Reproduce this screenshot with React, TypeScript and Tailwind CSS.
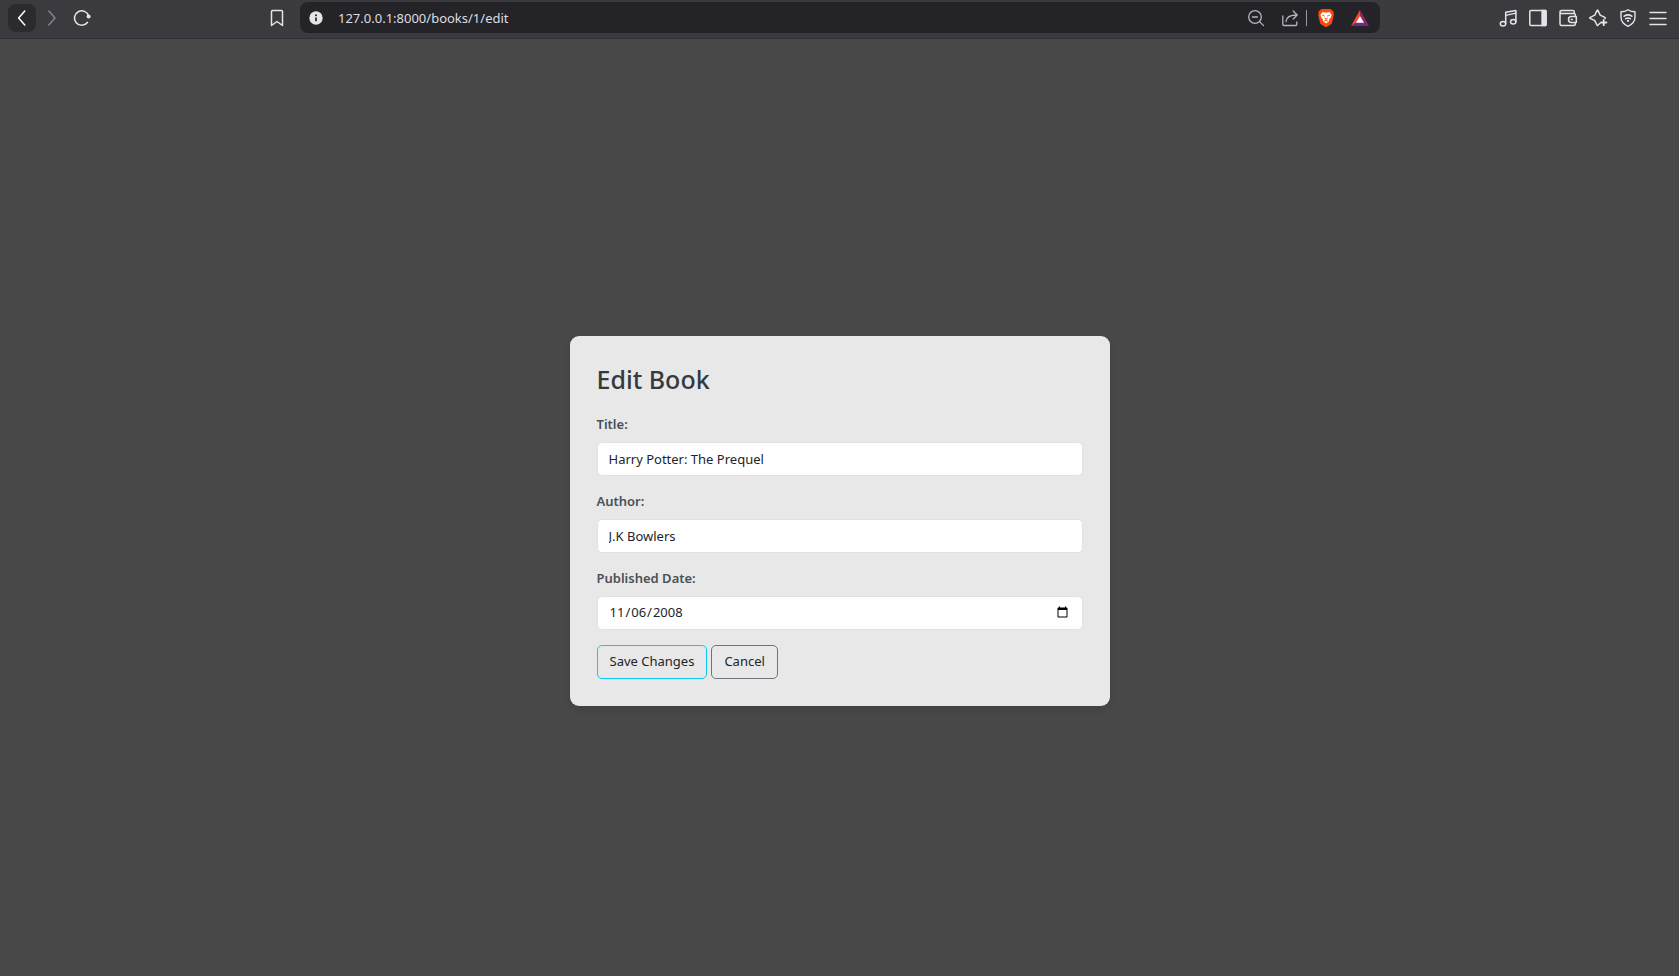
import { useState } from "react";
import type { ReactNode } from "react";

function Icon({ children, className = "h-5 w-5" }: { children: ReactNode; className?: string }) {
  return (
    <svg
      viewBox="0 0 20 20"
      fill="none"
      stroke="currentColor"
      strokeWidth="1.3"
      strokeLinecap="round"
      strokeLinejoin="round"
      aria-hidden="true"
      className={className}
    >
      {children}
    </svg>
  );
}

function ToolButton({ label, className = "", children }: { label: string; className?: string; children: ReactNode }) {
  return (
    <button type="button" aria-label={label} className={`flex h-7 shrink-0 items-center justify-center ${className}`}>
      {children}
    </button>
  );
}

function Toolbar() {
  return (
    <header className="flex h-[39px] items-start border-b border-[#303033] bg-[#3b3a3f] pt-[2px] text-[#e4e3e8]">
      <div className="flex w-[300px] shrink-0 items-center pt-[2px] pl-2">
        <ToolButton label="Back" className="w-7 rounded-lg bg-[#2b2b2d] text-white">
          <Icon>
            <path d="M12.8 3 6.6 10l6.2 7" strokeWidth="1.5" />
          </Icon>
        </ToolButton>
        <ToolButton label="Forward" className="w-8 text-[#85848a]">
          <Icon>
            <path d="M6.800 3 13 10l-6.200 7" strokeWidth="1.5" />
          </Icon>
        </ToolButton>
        <ToolButton label="Reload" className="w-7">
          <Icon>
            <path d="M16.600 8A7.200 7.200 0 1 0 15.400 14.400" strokeWidth="1.6" />
            <circle cx="16.600" cy="8.400" r="2" fill="currentColor" stroke="none" />
          </Icon>
        </ToolButton>
        <ToolButton label="Bookmark this page" className="mr-[13px] ml-auto w-5">
          <Icon>
            <path d="M5.500 2.500h9q1 0 1 1v14L10 13.500l-5.500 4v-14q0-1 1-1Z" strokeWidth="1.5" />
          </Icon>
        </ToolButton>
      </div>

      <div className="flex h-[31px] min-w-0 flex-1 items-center rounded-lg bg-[#242428] pr-[10px] pl-[6px]">
        <ToolButton label="Site information" className="w-5">
          <Icon>
            <circle cx="10" cy="10" r="6.700" fill="#e4e3e8" stroke="none" />
            <path d="M10 9.500v3.700" stroke="#242428" strokeWidth="1.700" strokeLinecap="butt" />
            <circle cx="10" cy="7.300" r="1" fill="#242428" stroke="none" />
          </Icon>
        </ToolButton>
        <input
          aria-label="Address"
          defaultValue="127.0.0.1:8000/books/1/edit"
          className="ml-3 min-w-0 flex-1 bg-transparent text-[13px] leading-5 text-[#dddce1] outline-none"
        />
        <ToolButton label="Zoom" className="w-5 text-[#b5b4ba]">
          <Icon>
            <circle cx="9" cy="9" r="6.300" />
            <path d="m13.600 13.600 4 4M6.500 9h5" />
          </Icon>
        </ToolButton>
        <ToolButton label="Share" className="ml-[14px] w-5 text-[#b5b4ba]">
          <Icon>
            <path d="M2.800 8v8.500q0 1 1 1h12q1 0 1-1V14M6 13.500c.3-4 3.500-6.500 11-6.500M13.200 3l4 4-4 4" />
          </Icon>
        </ToolButton>
        <span className="mx-[6px] h-4 w-px bg-[#9a999f]" />
        <ToolButton label="Brave Shields" className="ml-[3px] w-5">
          <Icon>
            <path
              d="m6.300 1-1.500.4L2.200 3.900l.5 1.500-.6 1.300 2 8.200q.3 1 1.300 1.700l3.600 2.200q1 .7 2 0l3.600-2.200q1-.7 1.300-1.700l2-8.200-.6-1.300.5-1.500-2.600-2.500-1.500-.4Z"
              fill="#fb4a0b"
              stroke="none"
            />
            <path
              d="m6.700 4 3.300.7 3.300-.7 2.200 2.500-.6 3-1.900 2 .2 1.500-3.200 2.500L6.800 13l.2-1.500-1.900-2-.6-3Z"
              fill="#fff"
              stroke="none"
            />
            <path d="m6.300 7.200 2.300.8M13.700 7.200l-2.300.8M8.700 10.200l1.300.6 1.300-.6M10 10.800v1.700M8.300 13l1.700-.6 1.700.6" stroke="#fb4a0b" strokeWidth=".8" />
          </Icon>
        </ToolButton>
        <ToolButton label="Brave Rewards" className="ml-[14px] w-5">
          <Icon>
            <path d="M10 2 1 18l9-5.500Z" fill="#ff4724" stroke="none" />
            <path d="m10 2 9 16-9-5.500Z" fill="#9e1f63" stroke="none" />
            <path d="M1 18h18l-9-6Z" fill="#662d91" stroke="none" />
            <path d="m10 8 4 6.800H6Z" fill="#fff" stroke="none" />
          </Icon>
        </ToolButton>
      </div>

      <div className="flex w-[299px] shrink-0 items-center justify-end gap-[10px] pt-[2px] pr-[11px]">
        <ToolButton label="Media controls">
          <Icon>
            <path d="M7.700 15.500V4.300l10.200-1.900V13.500" strokeWidth="1.500" />
            <path d="M7.700 7.300 17.900 5.200" />
            <ellipse cx="5" cy="15.700" rx="2.700" ry="2.300" strokeWidth="1.500" />
            <ellipse cx="15.200" cy="13.700" rx="2.700" ry="2.300" strokeWidth="1.500" />
          </Icon>
        </ToolButton>
        <ToolButton label="Sidebar">
          <Icon>
            <rect x="1.800" y="2.500" width="16.400" height="15" rx="1" strokeWidth="1.500" />
            <path d="M14 2.500h3.700v15H14Z" fill="currentColor" />
          </Icon>
        </ToolButton>
        <ToolButton label="Wallet">
          <Icon>
            <path
              d="M16.300 5.300V4q0-1.500-1.500-1.500H3.500Q2 2.500 2 4v12q0 1.500 1.500 1.500h12.300q1.500 0 1.500-1.500v-1.500M2 4q0 1.500 1.500 1.500h12.300q1.500 0 1.500 1.500v1.500"
              strokeWidth="1.500"
            />
            <path d="M18.300 8.500h-5q-2.800 0-2.800 3t2.800 3h5ZM13.300 11.500h1" strokeWidth="1.500" />
          </Icon>
        </ToolButton>
        <ToolButton label="Assistant">
          <Icon>
            <path
              d="M12 15.300 9.800 17.300q-.6.400-.9-.3L6.800 12.700 2.200 10.400q-.9-.5 0-1L6.800 7.100 9 2.500q.5-.9 1 0l2.200 4.600 4.600 2.300q.8.500.2 1"
              strokeWidth="1.500"
            />
            <path d="M15.700 11.800v5.400M13 14.500h5.400" strokeWidth="1.800" />
          </Icon>
        </ToolButton>
        <ToolButton label="VPN">
          <Icon>
            <path d="M10 1.700Q13 3.800 17 3.800V9q0 6-7 9.300Q3 15 3 9V3.800q4 0 7-2.100Z" strokeWidth="1.400" />
            <path d="M6.200 8.200q3.800-2.600 7.600 0M7.700 10.700q2.300-1.500 4.600 0" strokeWidth="1.600" />
            <circle cx="10" cy="12.900" r="1.100" fill="currentColor" stroke="none" />
          </Icon>
        </ToolButton>
        <ToolButton label="Menu">
          <Icon>
            <path d="M2 4.500h16M2 10.500h16M2 16.500h16" strokeWidth="1.400" />
          </Icon>
        </ToolButton>
      </div>
    </header>
  );
}

function Field({
  id,
  label,
  type = "text",
  value,
  onChange,
}: {
  id: string;
  label: string;
  type?: string;
  value: string;
  onChange: (value: string) => void;
}) {
  return (
    <div>
      <label htmlFor={id} className="mb-2 block text-[13px] leading-5 font-semibold text-[#495057]">
        {label}
      </label>
      <input
        id={id}
        type={type}
        value={value}
        onChange={(event) => onChange(event.target.value)}
        className="block h-[34px] w-full rounded-[5px] border border-[#dee2e6] bg-white px-[11px] text-[13px] text-[#212529] outline-none focus:border-[#86b7fe]"
      />
    </div>
  );
}

export default function App() {
  const [title, setTitle] = useState("Harry Potter: The Prequel");
  const [author, setAuthor] = useState("J.K Bowlers");
  const [published, setPublished] = useState("2008-11-06");

  return (
    <div className="flex min-h-screen flex-col bg-[#484848] font-['Noto_Sans','Open_Sans',sans-serif]">
      <Toolbar />
      <main className="flex flex-1 items-center justify-center pt-[26px]">
        <form
          onSubmit={(event) => event.preventDefault()}
          className="w-full max-w-[540px] rounded-[9px] bg-[#e8e8e8] p-[27px] shadow-[0_4px_8px_rgba(0,0,0,0.1)]"
        >
          <h1 className="mb-[19px] text-[25px] leading-8 font-medium text-[#343a40]">Edit Book</h1>
          <div className="flex flex-col gap-[15px]">
            <Field id="title" label="Title:" value={title} onChange={setTitle} />
            <Field id="author" label="Author:" value={author} onChange={setAuthor} />
            <Field id="published" label="Published Date:" type="date" value={published} onChange={setPublished} />
            <div className="flex gap-1">
              <button type="submit" className="h-[34px] rounded-[5px] border border-[#0dcaf0] px-3 text-[13px] text-[#212529]">
                Save Changes
              </button>
              <button type="button" className="h-[34px] rounded-[5px] border border-[#6c757d] px-3 text-[13px] text-[#212529]">
                Cancel
              </button>
            </div>
          </div>
        </form>
      </main>
    </div>
  );
}
